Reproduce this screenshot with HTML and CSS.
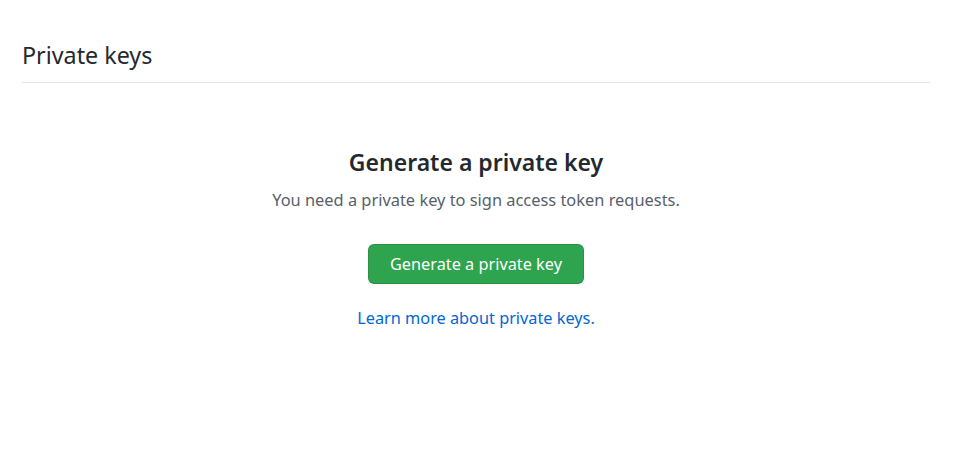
FILE: index.html
```html
<!DOCTYPE html>
<html lang="en">
<head>
<meta charset="utf-8">
<title>Private keys</title>
<link rel="stylesheet" href="styles.css">
</head>
<body>
<div class="page">
  <div class="subhead">
    <h2 class="subhead-title">Private keys</h2>
  </div>
  <div class="blankslate">
    <h3 class="blank-title">Generate a private key</h3>
    <p class="blank-text">You need a private key to sign access token requests.</p>
    <button class="btn-primary" type="button">Generate a private key</button>
    <p class="blank-link"><a href="#">Learn more about private keys</a>.</p>
  </div>
</div>
</body>
</html>
```
FILE: styles.css
```css
html, body {
  margin: 0;
  padding: 0;
  background: #ffffff;
}
body {
  font-family: "Noto Sans", "Open Sans", "Liberation Sans", sans-serif;
  color: #24292e;
  font-size: 16px;
}
.page {
  padding: 0 30px 0 22px;
}
.subhead {
  padding-top: 38px;
  padding-bottom: 9px;
  border-bottom: 1px solid #e1e4e8;
}
.subhead-title {
  margin: 0;
  font-size: 23.3px;
  font-weight: 400;
  line-height: 1.5;
}
.blankslate {
  display: flex;
  flex-direction: column;
  align-items: center;
  padding-top: 62px;
}
.blank-title {
  margin: 0;
  font-size: 23px;
  font-weight: 600;
  line-height: 1.5;
}
.blank-text {
  margin: 9px 0 0;
  color: #586069;
  font-size: 16.4px;
  line-height: 1.5;
}
.btn-primary {
  margin-top: 31px;
  height: 40px;
  padding: 0 21px;
  font-family: inherit;
  font-size: 16.3px;
  color: #ffffff;
  background: #2ea44f;
  border: 1px solid rgba(27, 31, 35, 0.15);
  border-radius: 6px;
}
.blank-link {
  margin: 22px 0 0;
  font-size: 16.3px;
  line-height: 1.5;
  color: #0366d6;
}
.blank-link a {
  color: #0366d6;
  text-decoration: none;
}
```
